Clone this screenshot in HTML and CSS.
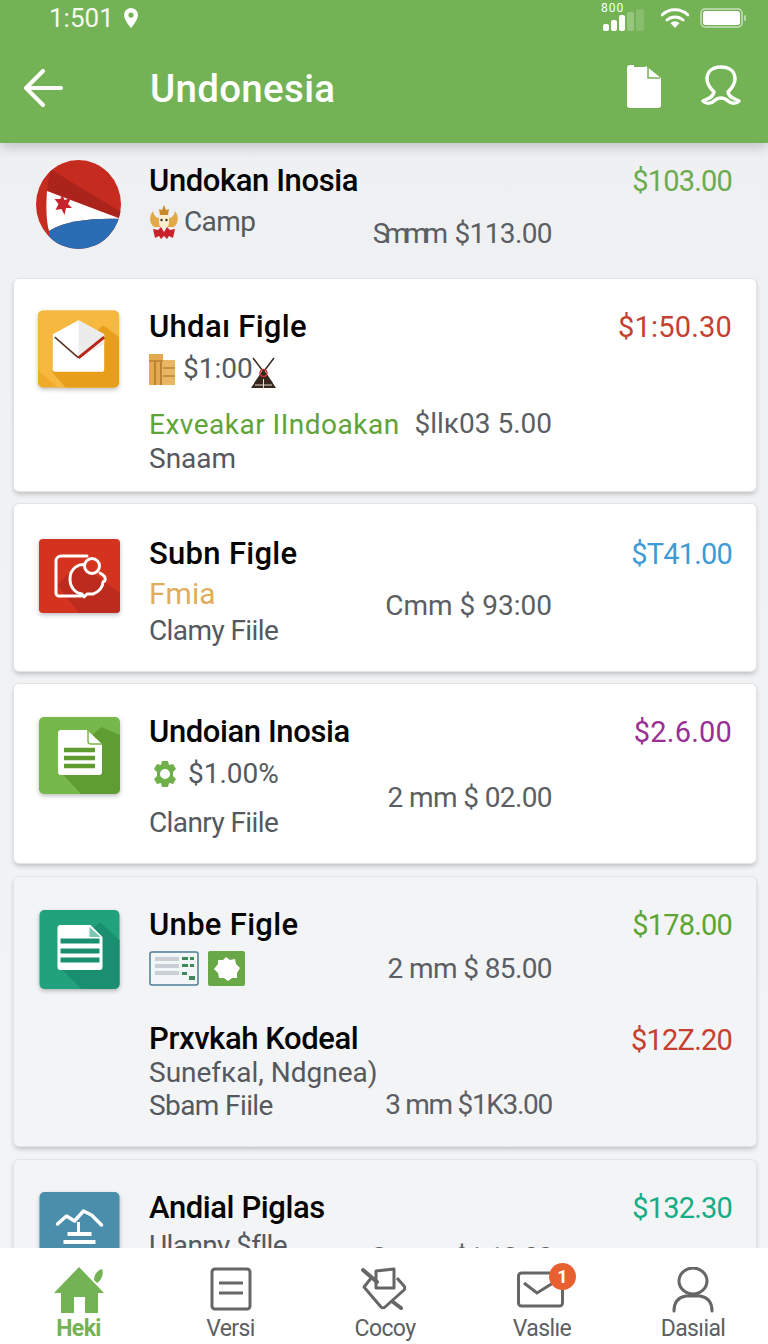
FILE: index.html
```html
<!DOCTYPE html>
<html>
<head>
    <title>Undonesia</title>
    <link rel="stylesheet" href="styles.css">
</head>
<body>
<div class="app">
    <header class="header">
        <div class="status">
            <div class="status-left">
                <span class="clock">1:501</span>
                <svg class="pin" viewBox="0 0 16 20"><path d="M8 0a7 7 0 0 0-7 7c0 5 7 13 7 13s7-8 7-13a7 7 0 0 0-7-7zm0 4.500a2.600 2.600 0 1 1 0 5.200 2.600 2.600 0 0 1 0-5.200z" fill="#fff" fill-rule="evenodd"/></svg>
            </div>
            <div class="status-right">
                <div class="signal">
                    <span class="signal-text">800</span>
                    <svg class="bars" viewBox="0 0 44 22">
                        <rect x="0" y="15" width="6" height="7" rx="2" fill="#fff"/>
                        <rect x="8" y="11" width="6" height="11" rx="2" fill="#fff"/>
                        <rect x="16" y="6" width="6" height="16" rx="2" fill="#fff"/>
                        <rect x="24" y="3" width="7" height="19" rx="2" fill="#fff" opacity=".25"/>
                        <rect x="33" y="0" width="8" height="22" rx="2" fill="#fff" opacity=".15"/>
                    </svg>
                </div>
                <svg class="wifi" viewBox="0 0 28 20"><path d="M1 7a19 19 0 0 1 26 0M6 12a12 12 0 0 1 16 0" fill="none" stroke="#fff" stroke-width="3" stroke-linecap="round"/><path d="M14 20l-4.500-5a6.500 6.500 0 0 1 9 0z" fill="#fff"/></svg>
                <svg class="battery" viewBox="0 0 46 20"><rect x="1" y="1" width="41" height="18" rx="4" fill="none" stroke="#fff" stroke-opacity=".6" stroke-width="1.500"/><rect x="3" y="3" width="37" height="14" rx="2.500" fill="#fff"/><rect x="44" y="7" width="2" height="6" rx="1" fill="#fff" opacity=".5"/></svg>
            </div>
        </div>
        <div class="appbar">
            <svg class="back" viewBox="0 0 40 38"><path d="M38 19H3M20 2 3 19l17 17" fill="none" stroke="#fff" stroke-width="4" stroke-linecap="round" stroke-linejoin="round"/></svg>
            <h1 class="appbar-title">Undonesia</h1>
            <svg class="doc" viewBox="0 0 34 43"><path d="M3 0h4v2h11l1-1 15 12v27a3 3 0 0 1-3 3H3a3 3 0 0 1-3-3V3a3 3 0 0 1 3-3z" fill="#fff"/><path d="M21 2v11h12" fill="none" stroke="#74b355" stroke-width="1.500"/></svg>
            <svg class="user" viewBox="0 0 42 40"><path d="M14 27C8 21 7 17 7 14 7 6 13 2 21 2s14 4 14 12c0 3-1 7-7 13 1 6 6 6 11 9-3 3-8 3-11 0-2-2-4-3-7-3s-5 1-7 3c-3 3-8 3-11 0 5-3 10-3 11-9z" fill="none" stroke="#fff" stroke-width="3.500" stroke-linejoin="round"/></svg>
        </div>
    </header>

    <main class="list">
        <section class="top-row">
            <svg class="flag" viewBox="0 0 85 89">
                <defs><clipPath id="flagClip"><ellipse cx="42.500" cy="44.500" rx="42.500" ry="44.500"/></clipPath></defs>
                <g clip-path="url(#flagClip)">
                    <rect width="85" height="89" fill="#c62b20"/>
                    <path d="M14 9 85 52V59L11 31z" fill="#ab241b"/>
                    <path d="M11 31 85 59C60 58 30 60 13 71 10 60 10 45 11 31z" fill="#fff"/>
                    <path d="M13 71C30 60 60 58 85 59V89H13z" fill="#2a6db5"/>
                    <path d="M13 71 16 89H0V60z" fill="#c62b20" opacity="0"/>
                    <path d="M26 34l2.500 6 6.500-2-3 6 4 4-6 0-1.500 7-3-6-6 1 3-6-4-5 6 0z" fill="#c8232b"/>
                </g>
            </svg>
            <div class="info">
                <div class="title">Undokan Inosia</div>
                <div class="sub gap-6 with-icon">
                    <svg class="crest" viewBox="0 0 30 34">
                        <path d="M15 0l2 5 3-1-1 6H11l-1-6 3 1z" fill="#c98a2b"/>
                        <path d="M4 6C0 11 0 18 5 22h20c5-4 5-11 1-16-1 5-3 6-5 7H9C7 12 5 11 4 6z" fill="#e2aa47"/>
                        <path d="M10 10h10v8a5 5 0 0 1-10 0z" fill="#fbeed0"/>
                        <circle cx="12.500" cy="15" r="1.200" fill="#333"/>
                        <circle cx="17.500" cy="15" r="1.200" fill="#333"/>
                        <path d="M4 24l5 1 3-3 3 5 3-5 3 3 5-1-2 9-4-2-2 3-3-3-3 3-2-3-4 2z" fill="#c8232b"/>
                    </svg>
                    <span class="tight">Camp</span>
                </div>
            </div>
            <div class="side">
                <div class="price c-green">$103.00</div>
                <div class="amount gap-18 tight"><span class="squeeze">Smmm</span> $113.00</div>
            </div>
        </section>

        <section class="card card-a">
            <svg class="app-icon icon-a" viewBox="0 0 82 78">
                <rect width="82" height="78" rx="5" fill="#f0ab2d"/>
                <path d="M82 5v68a5 5 0 0 1-5 5H20L0 60V5a5 5 0 0 1 5-5h72z" fill="#fbc14d" opacity=".6"/>
                <path d="M14 62l52-47 16 12v46a5 5 0 0 1-5 5H28z" fill="#e79f1b"/>
                <path d="M15 24 41 10l26 14v36a2 2 0 0 1-2 2H17a2 2 0 0 1-2-2z" fill="#fff"/>
                <path d="M41 10l26 14v10L41 48z" fill="#ececec"/>
                <path d="M17 27l24 21" stroke="#57311f" stroke-width="1.500" fill="none"/>
                <path d="M41 48l26-21" stroke="#b8261c" stroke-width="3" fill="none"/>
            </svg>
            <div class="info">
                <div class="title title-wide">Uhdaı Figle</div>
                <div class="sub gap-7 with-icon">
                    <svg class="books" viewBox="0 0 26 31">
                        <rect width="14" height="31" fill="#e3a94f"/>
                        <rect x="13" y="6" width="13" height="25" fill="#e8b665"/>
                        <path d="M6 8v23M12 8v23M0 7h14M14 14h12M14 22h12" stroke="#a3691f" stroke-width="1.200" fill="none"/>
                    </svg>
                    <span>$1:00</span>
                    <svg class="tent" viewBox="0 0 25 31">
                        <path d="M23 1 4 26M2 1l19 25" stroke="#3a2a22" stroke-width="1.500" fill="none"/>
                        <path d="M12.500 12 25 31H0z" fill="#35261f"/>
                        <circle cx="12.500" cy="16" r="3.500" fill="none" stroke="#c33" stroke-width="1.500"/>
                        <path d="M12.500 22v9M4 28h17" stroke="#e8dcc8" stroke-width="1"/>
                    </svg>
                </div>
                <div class="sub gap-22 c-leaf">Exveakar IIndoakan</div>
                <div class="sub">Snaam</div>
            </div>
            <div class="side">
                <div class="price price-wide c-red">$1:50.30</div>
                <div class="amount gap-62">$llк03 5.00</div>
            </div>
        </section>

        <section class="card card-b">
            <svg class="app-icon icon-b" viewBox="0 0 81 74">
                <rect width="81" height="74" rx="4" fill="#d4341f"/>
                <path d="M18 46l22-22 41 30v16a4 4 0 0 1-4 4H40z" fill="#bd2a1e"/>
                <path d="M30 17H22a5 5 0 0 0-5 5v32a3 3 0 0 0 3 3h22M30 17h18" fill="none" stroke="#fff" stroke-width="3" stroke-linecap="round"/>
                <path d="M48 26c-8-2-17 3-17 14 0 8 5 14 12 15l2 3 3-3h6c6-2 10-7 10-12 3-1 3-5 0-7-1-1-2-1-3-2" fill="none" stroke="#fff" stroke-width="3" stroke-linecap="round" stroke-linejoin="round"/>
                <circle cx="53" cy="27" r="7.500" fill="#d4341f" stroke="#fff" stroke-width="3"/>
            </svg>
            <div class="info">
                <div class="title title-wide">Subn Figle</div>
                <div class="sub gap-5 c-gold">Fmia</div>
                <div class="sub gap-3 tight">Clamy Fiile</div>
            </div>
            <div class="side">
                <div class="price c-blue">$T41.00</div>
                <div class="amount gap-17">Cmm $ 93:00</div>
            </div>
        </section>

        <section class="card card-c">
            <svg class="app-icon icon-c" viewBox="0 0 81 77">
                <rect width="81" height="77" rx="5" fill="#76b84a"/>
                <path d="M81 18v54a5 5 0 0 1-5 5H42L19 52 62 10z" fill="#5f9d33"/>
                <path d="M22 13h26l15 14v28a3 3 0 0 1-3 3H22a3 3 0 0 1-3-3V16a3 3 0 0 1 3-3z" fill="#fff"/>
                <path d="M49 13v11a3 3 0 0 0 3 3h11" fill="none" stroke="#76b84a" stroke-width="1.500"/>
                <path d="M25 33h31M25 41h31M25 49h31" stroke="#5f9d33" stroke-width="4.500"/>
            </svg>
            <div class="info">
                <div class="title">Undoian Inosia</div>
                <div class="sub gap-7 with-icon">
                    <svg class="gear" viewBox="0 0 26 26"><path d="M10 0h6l1 4 4-1 3 5-3 3v4l3 3-3 5-4-1-1 4h-6l-1-4-4 1-3-5 3-3v-4L2 8l3-5 4 1zm3 8a5 5 0 1 0 0 10 5 5 0 0 0 0-10z" fill="#6fb04a" fill-rule="evenodd"/></svg>
                    <span>$1.00%</span>
                </div>
                <div class="sub gap-15 tight">Clanry Fiile</div>
            </div>
            <div class="side">
                <div class="price price-wide c-purple">$2.6.00</div>
                <div class="amount gap-31 tight">2 mm $ 02.00</div>
            </div>
        </section>

        <section class="card card-d">
            <svg class="app-icon icon-d" viewBox="0 0 80 79">
                <rect width="80" height="79" rx="5" fill="#22a27c"/>
                <path d="M80 30v44a5 5 0 0 1-5 5H42L19 56 60 12z" fill="#1a8f6f"/>
                <path d="M21 15h30l12 12v30a3 3 0 0 1-3 3H21a3 3 0 0 1-3-3V18a3 3 0 0 1 3-3z" fill="#fff"/>
                <path d="M50 17v10h11z" fill="#22a27c" opacity=".6"/>
                <path d="M21 31h39M21 41h39M21 50h39" stroke="#1a8f6f" stroke-width="5"/>
            </svg>
            <div class="info">
                <div class="title title-wide">Unbe Figle</div>
                <div class="sub gap-8 with-icon">
                    <svg class="sheet" viewBox="0 0 50 35">
                        <rect x="1" y="1" width="48" height="33" rx="2" fill="#f3f6f6" stroke="#4f7c98" stroke-width="1.500"/>
                        <path d="M6 6h24v4H6zM6 13h24v4H6zM6 20h24v4H6z" fill="#c9cfd4"/>
                        <path d="M33 6h6v3h-6zM41 6h4v3h-4zM33 13h6v3h-6zM41 13h4v3h-4zM33 21h5v3h-5zM40 25h6v4h-6z" fill="#3d8a5a"/>
                    </svg>
                    <svg class="badge-gear" viewBox="0 0 37 35">
                        <rect width="37" height="35" rx="2" fill="#68a847"/>
                        <path d="M18 6l4 3 5-1 1 5 4 4-3 5 0 5-5 0-4 3-4-3-5 0-1-5-4-4 4-5 0-4 5 0z" fill="#fff"/>
                    </svg>
                </div>
                <div class="title gap-36">Prxvkah Kodeal</div>
                <div class="sub gap-neg">Sunefкal, Ndgnea)</div>
                <div class="sub gap-neg tight">Sbam Fiile</div>
            </div>
            <div class="side">
                <div class="price c-leaf">$178.00</div>
                <div class="amount gap-9 tight">2 mm $ 85.00</div>
                <div class="price c-red gap-36">$12Z.20</div>
                <div class="amount gap-30 tighter">3 mm $1K3.00</div>
            </div>
        </section>

        <section class="card card-e">
            <svg class="app-icon icon-e" viewBox="0 0 80 80">
                <rect width="80" height="80" rx="5" fill="#4a8eac"/>
                <path d="M18 32l9-8 8 5 9-10 8 4 10 10" fill="none" stroke="#fff" stroke-width="3.500" stroke-linecap="round" stroke-linejoin="round"/>
                <path d="M39 30v10" stroke="#fff" stroke-width="3"/>
                <path d="M28 42h24M24 50h32M20 58h40" stroke="#fff" stroke-width="4"/>
            </svg>
            <div class="info">
                <div class="title">Andial Piglas</div>
                <div class="sub gap-3 tight">Ulanny $flle</div>
            </div>
            <div class="side">
                <div class="price c-teal">$132.30</div>
                <div class="amount gap-15 tighter">Smmtt $1 13.00</div>
            </div>
        </section>
    </main>

    <nav class="tabs">
        <a class="tab tab-active">
            <svg class="tab-icon" viewBox="0 0 50 46">
                <path d="M25 0 50 26h-6v20H31V30H20v16H7V26H0z" fill="#74b355"/>
                <path d="M40 13c0-6 4-10 8-11 2 4 0 11-5 14z" fill="#74b355"/>
            </svg>
            <span>Heki</span>
        </a>
        <a class="tab">
            <svg class="tab-icon" viewBox="0 0 50 46"><rect x="6" y="2" width="38" height="40" rx="3" fill="none" stroke="#666" stroke-width="3"/><path d="M13 16h24M13 26h24" stroke="#666" stroke-width="3"/></svg>
            <span>Versi</span>
        </a>
        <a class="tab">
            <svg class="tab-icon" viewBox="0 0 50 46">
                <path d="M12 10 4 20l17 20c1 1 3 1 4 0l19-17c1-1 1-3 0-4l-7-8" fill="none" stroke="#666" stroke-width="3" stroke-linejoin="round"/>
                <path d="M16 21V4l18-2v19z" fill="#fff" stroke="#666" stroke-width="3" stroke-linejoin="round"/>
                <path d="M3 3l14 12M33 35l8 6" stroke="#666" stroke-width="4" stroke-linecap="round"/>
            </svg>
            <span>Cocoy</span>
        </a>
        <a class="tab">
            <span class="mail-wrap">
                <svg class="tab-icon" viewBox="0 0 50 46"><rect x="1.500" y="6" width="44" height="33" rx="3" fill="none" stroke="#666" stroke-width="3"/><path d="M7 16l13 10 16-10" fill="none" stroke="#666" stroke-width="3"/></svg>
                <span class="count">1</span>
            </span>
            <span>Vaslıe</span>
        </a>
        <a class="tab">
            <svg class="tab-icon" viewBox="0 0 50 46"><ellipse cx="25" cy="14" rx="14" ry="13" fill="none" stroke="#666" stroke-width="3"/><path d="M6 44c0-10 6-14 12-15M44 44c0-10-6-14-12-15M17 29h16" fill="none" stroke="#666" stroke-width="3" stroke-linecap="round"/></svg>
            <span>Dasıial</span>
        </a>
    </nav>
</div>
</body>
</html>
```

FILE: styles.css
```css
* {
    box-sizing: border-box;
}
body {
    margin: 0;
    font-family: Roboto, "Liberation Sans", sans-serif;
    background-color: #f0f1f3;
}
.app {
    width: 768px;
    height: 1344px;
    display: flex;
    flex-direction: column;
    overflow: hidden;
}

/* header */
.header {
    height: 143px;
    flex: none;
    background-color: #74b355;
    color: #fff;
    box-shadow: 0 4px 12px rgba(0, 0, 0, 0.2);
    position: relative;
    z-index: 2;
}
.status {
    height: 36px;
    display: flex;
    justify-content: space-between;
    align-items: center;
    padding: 0 22px 0 49px;
}
.status-left,
.status-right {
    display: flex;
    align-items: center;
}
.clock {
    font-size: 26px;
    color: #f4f8f0;
}
.pin {
    width: 16px;
    height: 20px;
    margin-left: 9px;
}
.signal {
    width: 45px;
    height: 24px;
    position: relative;
    margin-top: -2px;
}
.signal-text {
    position: absolute;
    left: -2px;
    top: -3px;
    font-size: 12px;
    line-height: 12px;
    letter-spacing: 1px;
}
.bars {
    width: 44px;
    height: 22px;
    display: block;
    margin-top: 4px;
}
.wifi {
    width: 28px;
    height: 20px;
    margin-left: 13px;
}
.battery {
    width: 46px;
    height: 20px;
    margin-left: 11px;
}
.appbar {
    height: 104px;
    display: flex;
    align-items: center;
    padding: 0 26px 0 23px;
}
.back {
    width: 40px;
    height: 38px;
}
.appbar-title {
    flex: 1;
    margin: 0 0 0 87px;
    font-size: 38.500px;
    font-weight: 500;
    letter-spacing: 0.3px;
}
.doc {
    width: 34px;
    height: 43px;
    margin-top: -3px;
}
.user {
    width: 42px;
    height: 40px;
    margin: -6px 0 0 39px;
}

/* list */
.list {
    flex: 1;
    min-height: 0;
    overflow: hidden;
    background: linear-gradient(#eff0f2, #f3f4f5);
}
.top-row,
.card {
    display: grid;
    grid-template-columns: 111px 1fr;
    color: #55595e;
}
.top-row {
    height: 136px;
    margin: 0 14px;
    padding: 20px 22px 0 22px;
    grid-template-columns: 113px 1fr;
}
.card {
    margin: 0 12px 13px 14px;
    padding: 30px 24px 23px 24px;
    background-color: #fff;
    border-radius: 5px;
    box-shadow: 0 0 0 1px #e2e3e5, 0 3px 5px rgba(0, 0, 0, 0.22);
}
.card-a {
    padding-bottom: 15px;
}
.card-b {
    padding-top: 32px;
}
.card-c,
.card-d {
    margin-bottom: 14px;
}
.card-d,
.card-e {
    background-color: #f3f4f6;
}
.info,
.side {
    grid-column: 2;
    grid-row: 1;
    min-width: 0;
}
.app-icon,
.flag {
    grid-column: 1;
    grid-row: 1;
}
.app-icon {
    width: 81px;
    filter: drop-shadow(0 2px 2px rgba(0, 0, 0, 0.25));
}
.flag {
    width: 85px;
    height: 89px;
    margin-top: -3px;
}
.icon-a {
    height: 78px;
    margin-top: 1px;
}
.icon-b {
    height: 74px;
    margin-top: 3px;
    margin-left: 1px;
}
.icon-c {
    height: 77px;
    margin-top: 3px;
    margin-left: 1px;
}
.icon-d {
    height: 79px;
    margin-top: 3px;
    margin-left: 1px;
}
.icon-e {
    height: 80px;
    margin-top: 2px;
    margin-left: 1px;
}

/* text lines */
.title {
    height: 36px;
    font-size: 31px;
    line-height: 36px;
    font-weight: 500;
    color: #050505;
    letter-spacing: -0.4px;
    white-space: nowrap;
}
.title-wide {
    letter-spacing: 0.3px;
}
.sub {
    height: 34px;
    font-size: 28px;
    line-height: 34px;
    white-space: nowrap;
}
.with-icon {
    display: flex;
    align-items: center;
}
.side {
    display: flex;
    flex-direction: column;
    align-items: flex-end;
}
.price {
    height: 36px;
    font-size: 29px;
    line-height: 36px;
    letter-spacing: -0.8px;
    white-space: nowrap;
}
.price-wide {
    letter-spacing: 0.2px;
}
.amount {
    height: 34px;
    font-size: 28px;
    line-height: 34px;
    margin-right: 180px;
    color: #5b5e63;
    white-space: nowrap;
}
.tight {
    letter-spacing: -0.6px;
}
.tighter {
    letter-spacing: -1.300px;
}
.squeeze {
    letter-spacing: -5px;
    margin-right: 5px;
}
.gap-3 { margin-top: 3px; }
.gap-5 { margin-top: 5px; }
.gap-6 { margin-top: 6px; }
.gap-7 { margin-top: 7px; }
.gap-8 { margin-top: 8px; }
.gap-9 { margin-top: 9px; }
.gap-15 { margin-top: 15px; }
.gap-17 { margin-top: 17px; }
.gap-18 { margin-top: 18px; }
.gap-22 { margin-top: 22px; }
.gap-30 { margin-top: 30px; }
.gap-31 { margin-top: 31px; }
.gap-36 { margin-top: 36px; }
.gap-62 { margin-top: 62px; }
.gap-neg { margin-top: -1px; }

.c-green { color: #6dab50; }
.c-red { color: #c6402f; }
.c-blue { color: #3f9bd5; }
.c-purple { color: #9b2f93; }
.c-leaf { color: #5ea437; }
.c-gold { color: #e0ad5c; font-size: 30px; }
.c-teal { color: #17ad84; }
.sub.c-leaf { letter-spacing: 0.5px; }

/* small icons beside text */
.crest {
    width: 30px;
    height: 34px;
    margin-right: 5px;
}
.books {
    width: 26px;
    height: 31px;
    margin-right: 8px;
}
.tent {
    width: 25px;
    height: 31px;
    margin: 6px 0 0 -2px;
}
.gear {
    width: 26px;
    height: 26px;
    margin: 0 10px 0 3px;
}
.sheet {
    width: 50px;
    height: 35px;
}
.badge-gear {
    width: 37px;
    height: 35px;
    margin-left: 9px;
}

/* bottom tabs */
.tabs {
    height: 96px;
    flex: none;
    display: grid;
    grid-template-columns: 157px 147px 162px 152px 150px;
    background-color: #fff;
    position: relative;
    z-index: 2;
}
.tab {
    display: flex;
    flex-direction: column;
    align-items: center;
    padding-top: 19px;
    font-size: 23px;
    line-height: 26px;
    color: #5c5f63;
    letter-spacing: -0.6px;
}
.tab-icon {
    width: 50px;
    height: 46px;
    display: block;
}
.tab > span:last-child {
    margin-top: 3px;
}
.tab-active {
    color: #74b355;
    font-weight: 700;
}
.mail-wrap {
    position: relative;
    display: block;
}
.count {
    position: absolute;
    top: -4px;
    right: -9px;
    width: 27px;
    height: 27px;
    border-radius: 50%;
    background-color: #e8602f;
    color: #fff;
    font-size: 18px;
    line-height: 27px;
    font-weight: 700;
    text-align: center;
    letter-spacing: 0;
}
```
